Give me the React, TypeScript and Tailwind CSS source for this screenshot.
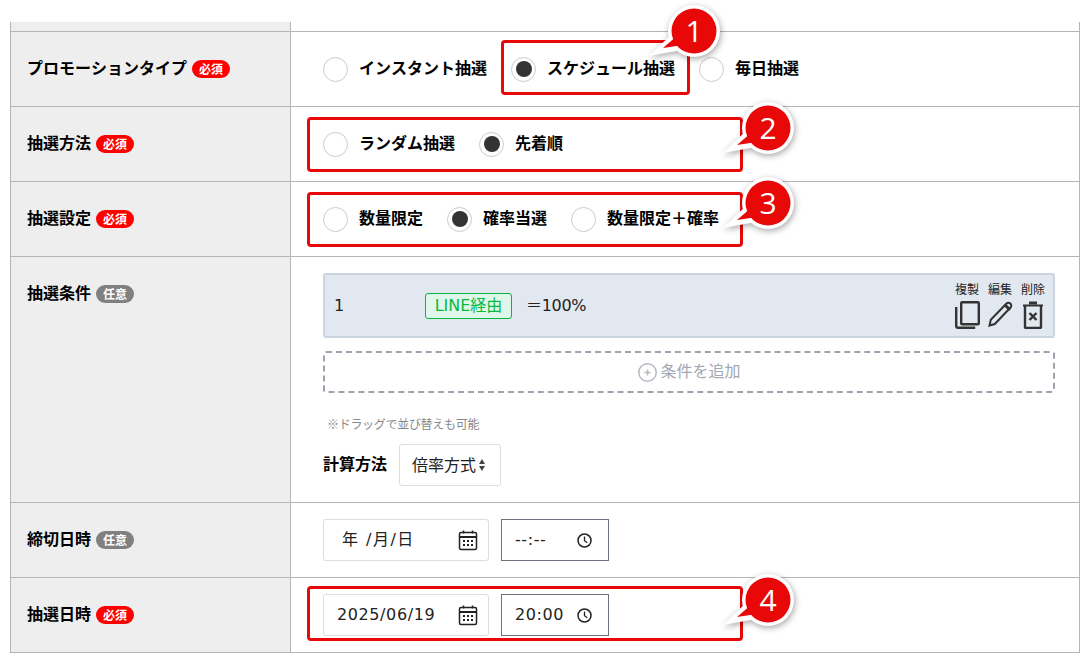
import type { ReactNode } from 'react';

const latin = "font-['DejaVu_Sans','Noto_Sans_CJK_JP',sans-serif]";

function Badge({ kind }: { kind: 'required' | 'optional' }) {
    return (
        <span
            className={`ml-[5px] inline-flex h-[18px] w-[38px] items-center justify-center rounded-full text-[12px] leading-none font-bold text-white ${
                kind === 'required' ? 'bg-[#ff0000]' : 'bg-[#808080]'
            }`}
        >
            {kind === 'required' ? '必須' : '任意'}
        </span>
    );
}

function Row({
    label,
    badge,
    top,
    className,
    children,
}: {
    label: string;
    badge: 'required' | 'optional';
    top?: boolean;
    className: string;
    children: ReactNode;
}) {
    return (
        <div className={`flex border-t border-[#b5b5b5] ${className}`}>
            <div
                className={`flex w-[280px] shrink-0 border-r border-[#b5b5b5] bg-[#eeeeee] pl-[16px] ${
                    top ? 'items-start pt-[25px]' : 'items-center'
                }`}
            >
                <div className="flex h-[24px] items-center">
                    <span className="-mt-[4px] text-[16px] leading-[24px] font-bold text-black">{label}</span>
                    <Badge kind={badge} />
                </div>
            </div>
            <div className="min-w-0 flex-1 pl-[32px]">{children}</div>
        </div>
    );
}

function Radio({ label, checked }: { label: string; checked?: boolean }) {
    return (
        <div className="flex items-center">
            <span className="flex h-[25px] w-[25px] items-center justify-center rounded-full border border-[#cccccc] bg-white">
                {checked && <span className="h-[16px] w-[16px] rounded-full bg-[#333333]" />}
            </span>
            <span className="-mt-[4px] ml-[11px] text-[16px] leading-[24px] font-bold text-black">{label}</span>
        </div>
    );
}

function CopyIcon() {
    return (
        <svg width="25" height="28" viewBox="0 0 25 28" fill="none" stroke="#333333" strokeWidth="2.400">
            <rect x="6.200" y="1.200" width="17.600" height="22" rx="1" />
            <path d="M1.200 6v18.800a2 2 0 0 0 2 2h17" />
        </svg>
    );
}

function PenIcon() {
    return (
        <svg width="25" height="28" viewBox="0 0 25 28" fill="none" stroke="#333333" strokeWidth="2">
            <path d="M1.500 24.500l1.300-5.800L18.500 2.500a2.600 2.600 0 0 1 3.700 0l.3.300a2.600 2.600 0 0 1 0 3.700L6.800 23z" />
            <path d="M17 4l5 5" strokeWidth="3" />
        </svg>
    );
}

function TrashIcon() {
    return (
        <svg width="22" height="28" viewBox="0 0 22 28" fill="none" stroke="#333333" strokeWidth="2.400">
            <path d="M1 4.500h20" strokeWidth="2" />
            <path d="M7 2h8" strokeWidth="3" />
            <path d="M3 5v21a1 1 0 0 0 1 1h14a1 1 0 0 0 1-1V5" />
            <path d="M7.500 12l7 7M14.500 12l-7 7" strokeWidth="2.400" />
        </svg>
    );
}

function CalendarIcon() {
    return (
        <svg width="20" height="21" viewBox="0 0 20 21" fill="none">
            <rect x="1.500" y="2.500" width="17" height="17" rx="1.500" stroke="#222222" strokeWidth="1.500" />
            <path d="M1 7h18" stroke="#222222" strokeWidth="2" />
            <path d="M5.500 0.500v3M14.500 0.500v3" stroke="#222222" strokeWidth="1.500" />
            <path
                d="M5 10h2v2H5zM9 10h2v2H9zM13 10h2v2h-2zM5 14h2v2H5zM9 14h2v2H9zM13 14h2v2h-2z"
                fill="#222222"
            />
        </svg>
    );
}

function ClockIcon() {
    return (
        <svg width="15" height="15" viewBox="0 0 15 15" fill="none" stroke="#222222" strokeWidth="1.500">
            <circle cx="7.500" cy="7.500" r="6.500" />
            <path d="M7.500 3.500v4.200l2.800 2" strokeWidth="1.300" />
        </svg>
    );
}

function DateTime({ date, time, empty }: { date: string; time: string; empty?: boolean }) {
    return (
        <div className={`flex gap-[12px] ${latin}`}>
            <div
                className={`flex h-[42px] w-[166px] items-center justify-between rounded-[3px] border border-[#dddddd] bg-white pr-[10px] text-[16px] text-[#222222] ${
                    empty ? 'pl-[18px] tracking-[1.500px]' : 'pl-[13px] tracking-[0.6px]'
                }`}
            >
                <span>{date}</span>
                <CalendarIcon />
            </div>
            <div className="flex h-[42px] w-[108px] items-center justify-between border border-[#6b7280] bg-white pr-[16px] pl-[13px] text-[16px] tracking-[0.6px] text-[#222222]">
                <span>{time}</span>
                <ClockIcon />
            </div>
        </div>
    );
}

function Action({ label, children }: { label: string; children: ReactNode }) {
    return (
        <div className="flex w-[26px] flex-col items-center gap-[6px]">
            <span className="text-[12px] leading-[12px] whitespace-nowrap">{label}</span>
            {children}
        </div>
    );
}

function Callout({ n, className }: { n: number; className: string }) {
    return (
        <div className={`absolute h-[60px] w-[80px] ${className}`}>
            <svg width="80" height="60" viewBox="0 0 80 60" className="drop-shadow-[1px_2px_3px_rgba(0,0,0,0.35)]">
                <circle cx="50" cy="26" r="26" fill="#ffffff" />
                <path d="M5 51L31 26L38 45z" fill="#ffffff" />
                <path d="M19 43L34 30L39 40z" fill="#e80808" />
                <circle cx="50" cy="26" r="22.500" fill="#e80808" />
            </svg>
            <span className="absolute top-0 left-[30px] w-[40px] text-center font-['Open_Sans',sans-serif] text-[30px] leading-[52px] text-white">
                {n}
            </span>
        </div>
    );
}

export default function App() {
    return (
        <div className="relative h-[660px] w-[1091px] overflow-hidden bg-white pt-[22px] font-['Noto_Sans_CJK_JP','Noto_Sans',sans-serif] text-[#222222] [font-kerning:none]">
            <div className="ml-[10px] w-[1070px] border-x border-b border-[#b5b5b5]">
                {/* Cut-off row above */}
                <div className="flex h-[9px]">
                    <div className="w-[280px] border-r border-[#b5b5b5] bg-[#eeeeee]" />
                </div>

                <Row label="プロモーションタイプ" badge="required" className="h-[75px]">
                    <div className="flex h-full items-center gap-[24px]">
                        <Radio label="インスタント抽選" />
                        <Radio label="スケジュール抽選" checked />
                        <Radio label="毎日抽選" />
                    </div>
                </Row>

                <Row label="抽選方法" badge="required" className="h-[75px]">
                    <div className="flex h-full items-center gap-[24px]">
                        <Radio label="ランダム抽選" />
                        <Radio label="先着順" checked />
                    </div>
                </Row>

                <Row label="抽選設定" badge="required" className="h-[75px]">
                    <div className="flex h-full items-center gap-[24px]">
                        <Radio label="数量限定" />
                        <Radio label="確率当選" checked />
                        <Radio label="数量限定＋確率" />
                    </div>
                </Row>

                <Row label="抽選条件" badge="optional" top className="h-[246px]">
                    <div className="w-[732px] pt-[16px]">
                        <div className="flex h-[65px] items-center rounded-[3px] border-2 border-[#cbd5e1] bg-[#e2e8f0] pr-[7px] pl-[9px]">
                            <span className={`w-[91px] text-[16px] ${latin}`}>1</span>
                            <span
                                className={`flex h-[26px] w-[87px] items-center justify-center rounded-[3px] border border-[#09b83e] bg-[#dff7ea] text-[16px] text-[#09b83e] ${latin}`}
                            >
                                LINE経由
                            </span>
                            <span className={`ml-[14px] text-[16px] tracking-[-0.3px] ${latin}`}>＝100%</span>
                            <div className="ml-auto flex gap-[7px]">
                                <Action label="複製">
                                    <CopyIcon />
                                </Action>
                                <Action label="編集">
                                    <PenIcon />
                                </Action>
                                <Action label="削除">
                                    <TrashIcon />
                                </Action>
                            </div>
                        </div>

                        <div className="mt-[13px] flex h-[42px] items-center justify-center rounded-[3px] border-2 border-dashed border-[#9ca3af] text-[16px] text-[#a3a8b3]">
                            <svg width="19" height="19" viewBox="0 0 19 19" fill="none" stroke="#b4b9c2" className="mr-[3px] ml-[1px]">
                                <circle cx="9.500" cy="9.500" r="8.750" strokeWidth="1.500" />
                                <path d="M9.500 6.500v6M6.500 9.500h6" strokeWidth="1.500" />
                            </svg>
                            <span className="-mt-[4px]">条件を追加</span>
                        </div>

                        <p className="mt-[22px] pl-[4px] text-[12px] leading-[18px] tracking-[-0.3px] text-[#888888]">
                            ※ドラッグで並び替えも可能
                        </p>

                        <div className="mt-[11px] flex items-center">
                            <span className="-mt-[4px] text-[16px] font-bold text-black">計算方法</span>
                            <div className="ml-[12px] flex h-[42px] w-[102px] items-center rounded-[3px] border border-[#dddddd] pl-[12px] text-[16px]">
                                <span className="-mt-[2px]">倍率方式</span>
                                <svg width="8" height="14" viewBox="0 0 8 14" fill="#444444" className="ml-[2px]">
                                    <path d="M4 1l3 5H1zM4 13L1 8h6z" />
                                </svg>
                            </div>
                        </div>
                    </div>
                </Row>

                <Row label="締切日時" badge="optional" className="h-[75px]">
                    <div className="flex h-full items-center">
                        <DateTime date="年 /月/日" time="--:--" empty />
                    </div>
                </Row>

                <Row label="抽選日時" badge="required" className="h-[75px]">
                    <div className="flex h-full items-center">
                        <DateTime date="2025/06/19" time="20:00" />
                    </div>
                </Row>
            </div>

            {/* Annotations */}
            <div className="absolute top-[40px] left-[501px] h-[55px] w-[189px] rounded-[4px] border-[3px] border-[#e80808]" />
            <div className="absolute top-[117px] left-[307px] h-[55px] w-[436px] rounded-[4px] border-[3px] border-[#e80808]" />
            <div className="absolute top-[192px] left-[307px] h-[55px] w-[436px] rounded-[4px] border-[3px] border-[#e80808]" />
            <div className="absolute top-[586px] left-[307px] h-[55px] w-[436px] rounded-[4px] border-[3px] border-[#e80808]" />

            <Callout n={1} className="top-[5px] left-[644px]" />
            <Callout n={2} className="top-[102px] left-[718px]" />
            <Callout n={3} className="top-[177px] left-[718px]" />
            <Callout n={4} className="top-[574px] left-[718px]" />
        </div>
    );
}
